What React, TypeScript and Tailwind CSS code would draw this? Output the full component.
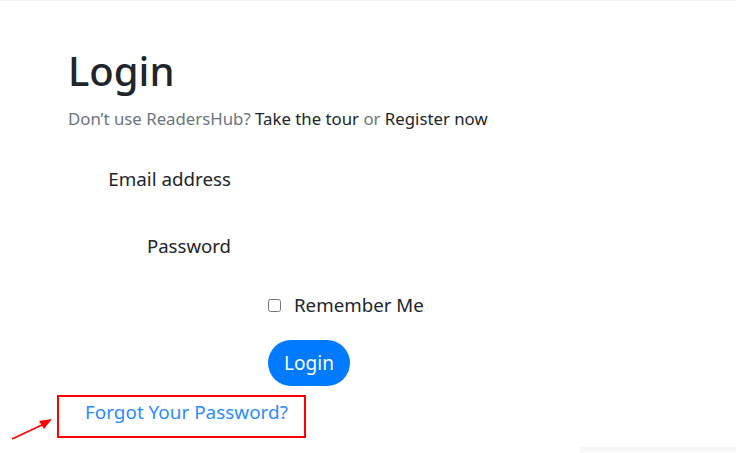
export default function App() {
  return (
    <div className="relative w-[736px] h-[453px] bg-white overflow-hidden border-t border-[#f2f2f2]" style={{ fontFamily: '"Noto Sans", "Open Sans", sans-serif' }}>
      <div className="pl-[68px] pt-[44px]">
        <h1 className="text-[40px] leading-[52px] font-medium text-[#212529]">Login</h1>
        <p className="mt-[10px] text-[16.8px] leading-[24px] text-[#6c757d]">
          Don’t use ReadersHub? <a href="#" className="text-[#212529]">Take the tour</a> or{' '}
          <a href="#" className="text-[#212529]">Register now</a>
        </p>

        <div className="mt-[26px] flex h-[44px] items-center">
          <label className="w-[163px] text-right text-[18.8px] text-[#212529]">Email address</label>
        </div>
        <div className="mt-[23px] flex h-[44px] items-center">
          <label className="w-[163px] text-right text-[18.6px] text-[#212529]">Password</label>
        </div>

        <div className="mt-[22px] flex h-[30px] items-center pl-[200px]">
          <input type="checkbox" className="w-[13px] h-[13px] m-0 accent-[#c8c8c8]" />
          <span className="ml-[13px] text-[18.7px] text-[#212529]">Remember Me</span>
        </div>

        <div className="mt-[20px] pl-[200px]">
          <button className="h-[46px] w-[82px] rounded-full bg-[#007bff] text-white text-[19px]">Login</button>
        </div>
      </div>

      <div className="absolute left-[57px] top-[394px] w-[249px] h-[43px] border-2 border-[#ff0000]">
        <a href="#" className="absolute left-[26px] top-[1px] text-[18.9px] text-[#2c8cff]">Forgot Your Password?</a>
      </div>

      <svg className="absolute left-[8px] top-[412px]" width="50" height="32" viewBox="0 0 50 32">
        <line x1="4" y1="26" x2="36" y2="11" stroke="#ff0000" strokeWidth="1.5" />
        <polygon points="44,6 31,8 36,16" fill="#ff0000" />
      </svg>

      <div className="absolute left-[580px] top-[446px] w-[156px] h-[8px] bg-gradient-to-b from-[#f4f4f4] to-white" />
    </div>
  )
}
